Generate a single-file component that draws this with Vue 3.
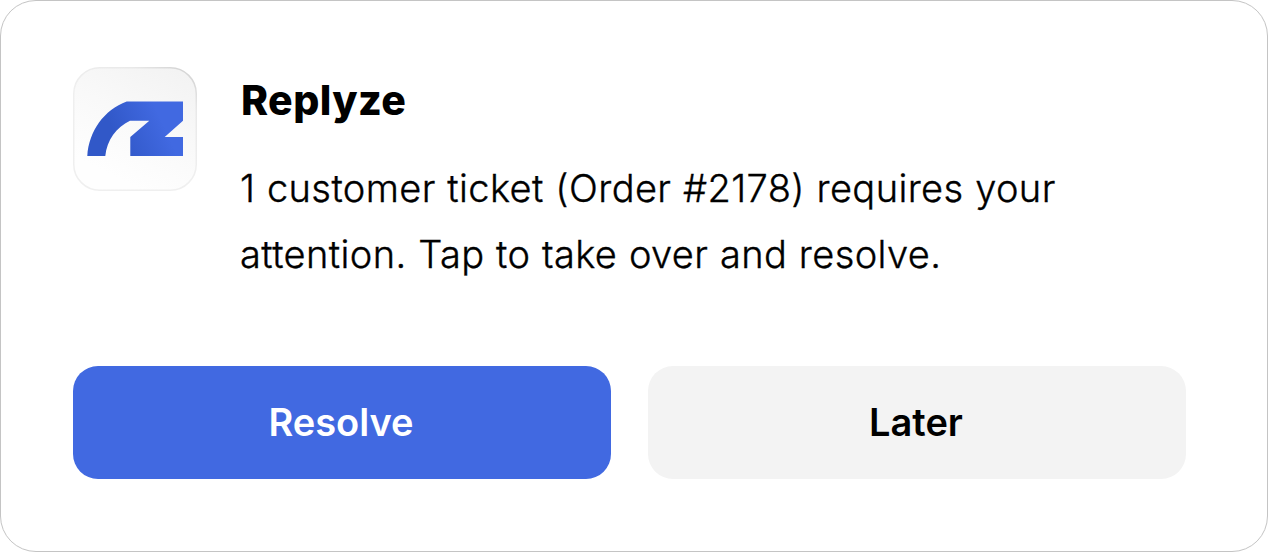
<script setup>
import { ref } from 'vue'

const title = ref('Replyze')
const lines = ['1 customer ticket (Order #2178) requires your', 'attention. Tap to take over and resolve.']
const actions = [
  { label: 'Resolve', variant: 'primary' },
  { label: 'Later', variant: 'secondary' },
]
</script>

<template>
  <section class="notification">
    <div class="notification__header">
      <div class="notification__logo">
        <svg width="124" height="124" viewBox="0 0 124 124">
          <defs>
            <linearGradient id="logo-tile" x1="0.8" y1="0" x2="0.35" y2="0.9">
              <stop offset="0" stop-color="#f3f3f3" />
              <stop offset="0.5" stop-color="#f9f9f9" />
              <stop offset="1" stop-color="#fefefe" />
            </linearGradient>
            <linearGradient id="logo-edge" x1="1" y1="0" x2="0.6" y2="0.6">
              <stop offset="0" stop-color="#cecece" />
              <stop offset="0.4" stop-color="#e9e9e9" />
              <stop offset="1" stop-color="#efefef" />
            </linearGradient>
            <linearGradient id="logo-fill" gradientUnits="userSpaceOnUse" x1="42" y1="68" x2="86" y2="48">
              <stop offset="0" stop-color="#3158c8" />
              <stop offset="1" stop-color="#4169e1" />
            </linearGradient>
          </defs>
          <rect
            x="0.75"
            y="0.75"
            width="122.5"
            height="122.5"
            rx="26"
            fill="url(#logo-tile)"
            stroke="url(#logo-edge)"
            stroke-width="1.5"
          />
          <path
            fill="url(#logo-fill)"
            d="M14.3 89C15.8 64 31 43 53.7 34.5H110V53.7L91.7 70H110V89H57.3V70L76.3 53.7H57C43.5 60 33.8 73 32.3 89Z"
          />
        </svg>
      </div>
      <div class="notification__content">
        <h1 class="notification__title">{{ title }}</h1>
        <p class="notification__message">
          <span v-for="line in lines" :key="line">{{ line }}</span>
        </p>
      </div>
    </div>
    <div class="notification__actions">
      <button
        v-for="action in actions"
        :key="action.label"
        type="button"
        :class="['notification__btn', `notification__btn--${action.variant}`]"
      >
        {{ action.label }}
      </button>
    </div>
  </section>
</template>

<style scoped>
.notification {
  box-sizing: border-box;
  width: 1268px;
  height: 552px;
  padding: 66px 81px 72px 72px;
  border: 1px solid #c4c4c4;
  border-radius: 36px;
  background: #ffffff;
  color: #000000;
  font-family: Inter, 'Liberation Sans', sans-serif;
}

.notification__header {
  display: flex;
  gap: 43px;
  height: 299px;
}

.notification__logo {
  width: 124px;
  height: 124px;
}

.notification__logo svg {
  display: block;
}

.notification__title {
  margin: 8px 0 0 1px;
  font-size: 41px;
  line-height: 50px;
  font-weight: 800;
  letter-spacing: 0.4px;
}

.notification__message {
  margin: 30px 0 0;
  font-size: 38px;
  line-height: 66px;
  font-weight: 300;
  letter-spacing: 0.4px;
  word-spacing: 0.5px;
  -webkit-text-stroke: 0.35px #000000;
}

.notification__message span {
  display: block;
  white-space: nowrap;
}

.notification__actions {
  display: grid;
  grid-template-columns: 538px 538px;
  gap: 37px;
}

.notification__btn {
  height: 113px;
  padding: 0 2px 2px 0;
  border: 0;
  border-radius: 25px;
  font-family: inherit;
  font-size: 38px;
  font-weight: 600;
}

.notification__btn--primary {
  background: #4169e1;
  color: #ffffff;
}

.notification__btn--secondary {
  background: #f3f3f3;
  color: #000000;
}
</style>

<style>
body {
  margin: 0;
  background: #ffffff;
}
</style>
